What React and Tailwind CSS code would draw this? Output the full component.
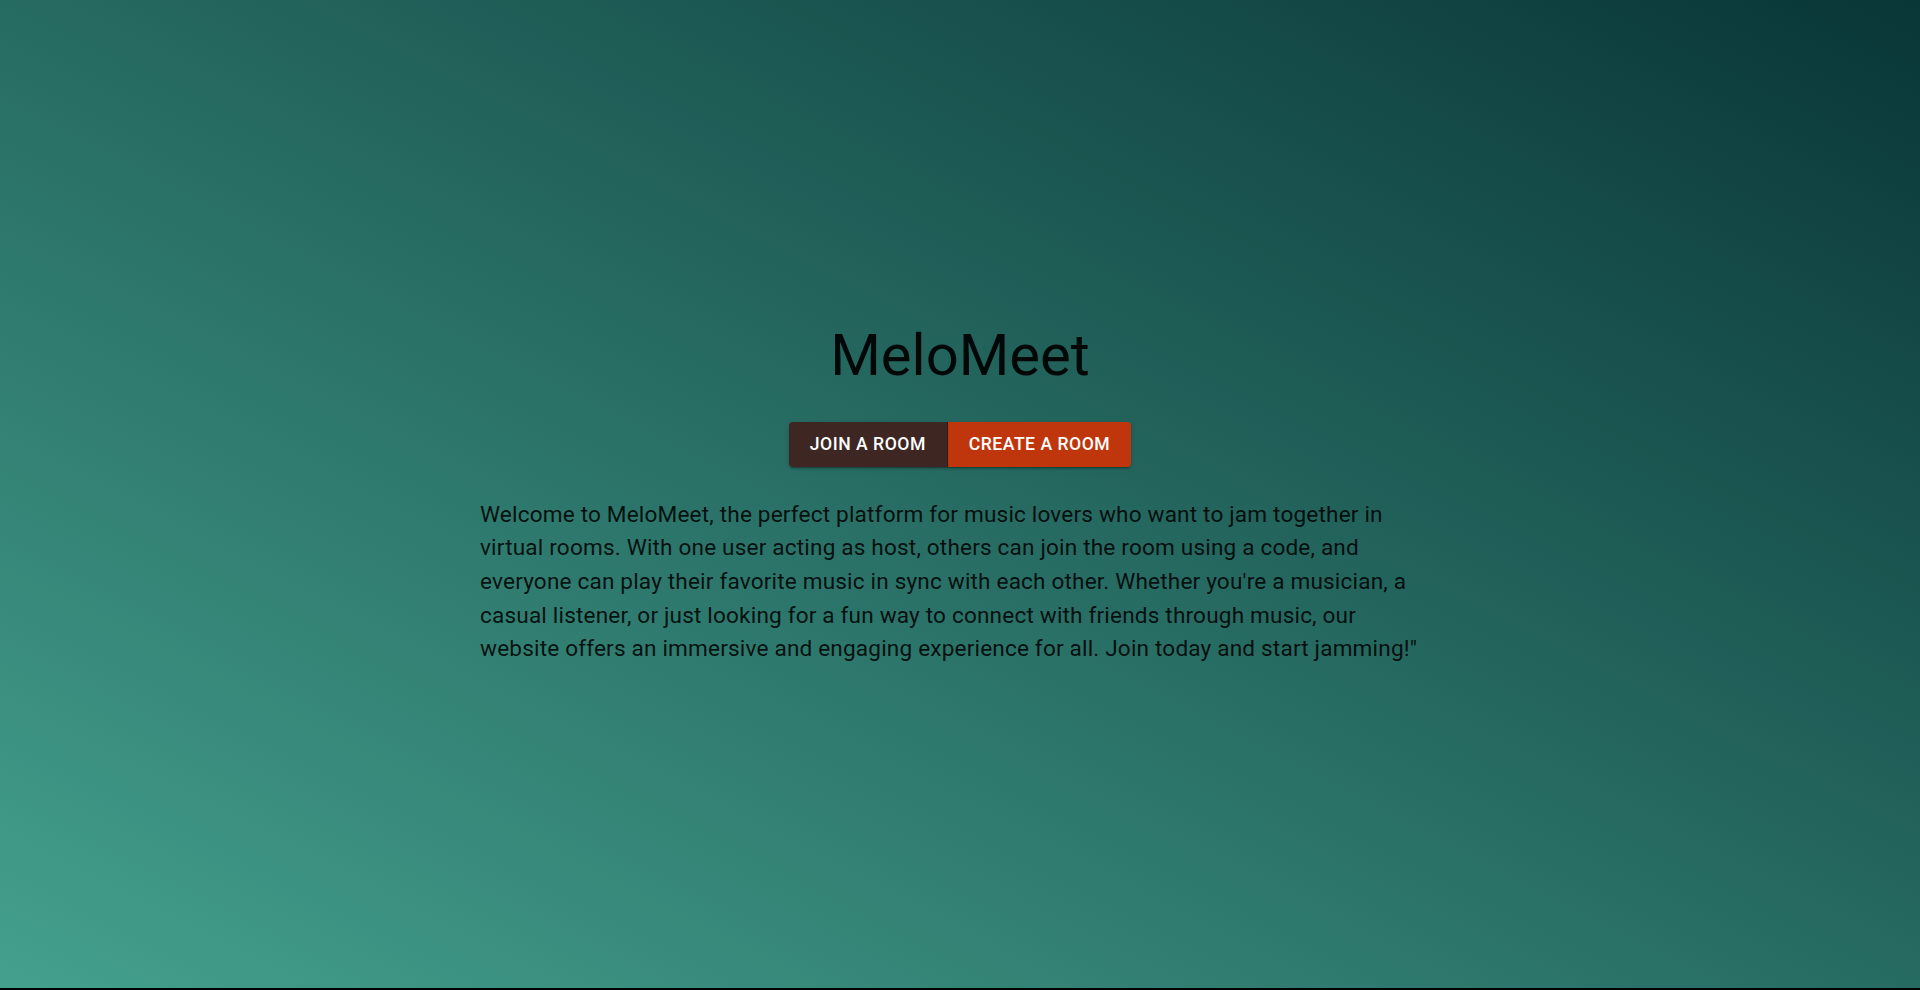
const INTRO =
  "Welcome to MeloMeet, the perfect platform for music lovers who want to jam together in virtual rooms. With one user acting as host, others can join the room using a code, and everyone can play their favorite music in sync with each other. Whether you're a musician, a casual listener, or just looking for a fun way to connect with friends through music, our website offers an immersive and engaging experience for all. Join today and start jamming!\""

const BTN_SHADOW =
  'shadow-[0px_3px_1px_-2px_rgba(0,0,0,0.2),0px_2px_2px_0px_rgba(0,0,0,0.14),0px_1px_5px_0px_rgba(0,0,0,0.12)]'

export default function App() {
  return (
    <div className="h-[990px] w-full bg-black font-['Roboto','Liberation_Sans',sans-serif]">
      <div className="h-[988px] w-full bg-[linear-gradient(to_top_right,#44a08d,#093637)] flex flex-col items-center pt-[321px]">
        {/* Title */}
        <h1 className="text-[58px] leading-[1.2] font-normal text-[rgba(0,0,0,0.92)]">MeloMeet</h1>

        {/* Button group */}
        <div className={`mt-[31px] flex rounded ${BTN_SHADOW}`}>
          <button className="h-[45px] px-[21px] rounded-l bg-[#3e2723] border-r border-[#2b1b18] text-white text-[17.6px] font-medium uppercase tracking-[0.02857em]">
            Join a Room
          </button>
          <button className="h-[45px] px-[21px] rounded-r bg-[#bf360c] text-white text-[17.6px] font-medium uppercase tracking-[0.02857em]">
            Create a Room
          </button>
        </div>

        {/* Intro */}
        <p className="mt-[31px] w-[960px] text-[22.6px] leading-[33.7px] tracking-[0.0075em] text-[rgba(0,0,0,0.87)]">
          {INTRO}
        </p>
      </div>
    </div>
  )
}
